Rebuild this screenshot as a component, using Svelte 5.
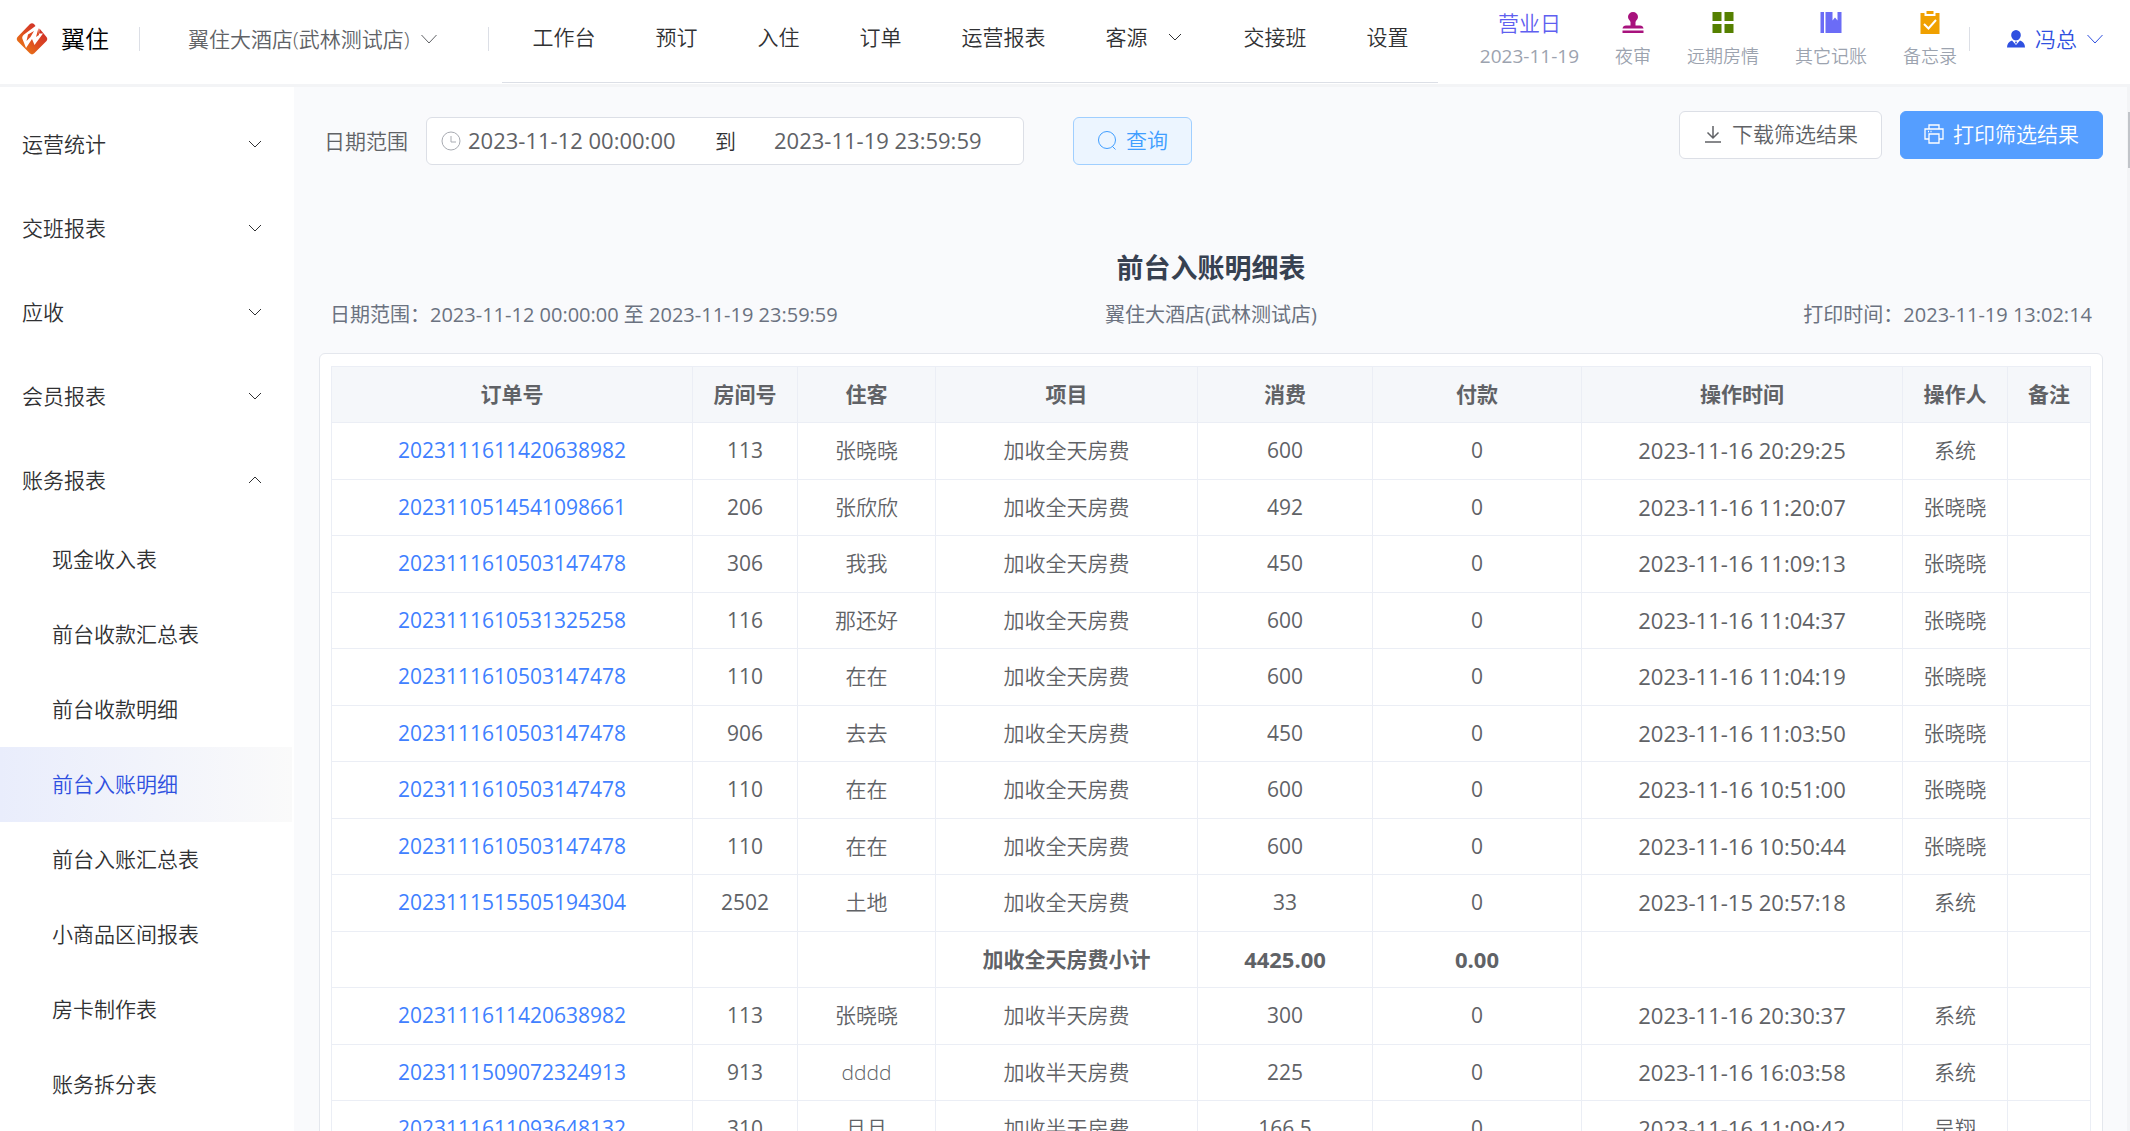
<script>
    let range = ["2023-11-12 00:00:00", "2023-11-19 23:59:59"];
    let hotel = "翼住大酒店(武林测试店)";
    let current = "前台入账明细";
    let opened = "账务报表";

    const menu = ["工作台", "预订", "入住", "订单", "运营报表", "客源", "交接班", "设置"];
    const groups = ["运营统计", "交班报表", "应收", "会员报表", "账务报表"];
    const reports = [
        "现金收入表",
        "前台收款汇总表",
        "前台收款明细",
        "前台入账明细",
        "前台入账汇总表",
        "小商品区间报表",
        "房卡制作表",
        "账务拆分表",
    ];

    const columns = [
        { title: "订单号", width: 361 },
        { title: "房间号", width: 105 },
        { title: "住客", width: 138 },
        { title: "项目", width: 262 },
        { title: "消费", width: 175 },
        { title: "付款", width: 209 },
        { title: "操作时间", width: 321 },
        { title: "操作人", width: 105 },
        { title: "备注", width: 83 },
    ];

    //order, room, guest, item, charge, paid, time, operator
    const rows = [
        ["2023111611420638982", "113", "张晓晓", "加收全天房费", "600", "0", "2023-11-16 20:29:25", "系统"],
        ["2023110514541098661", "206", "张欣欣", "加收全天房费", "492", "0", "2023-11-16 11:20:07", "张晓晓"],
        ["2023111610503147478", "306", "我我", "加收全天房费", "450", "0", "2023-11-16 11:09:13", "张晓晓"],
        ["2023111610531325258", "116", "那还好", "加收全天房费", "600", "0", "2023-11-16 11:04:37", "张晓晓"],
        ["2023111610503147478", "110", "在在", "加收全天房费", "600", "0", "2023-11-16 11:04:19", "张晓晓"],
        ["2023111610503147478", "906", "去去", "加收全天房费", "450", "0", "2023-11-16 11:03:50", "张晓晓"],
        ["2023111610503147478", "110", "在在", "加收全天房费", "600", "0", "2023-11-16 10:51:00", "张晓晓"],
        ["2023111610503147478", "110", "在在", "加收全天房费", "600", "0", "2023-11-16 10:50:44", "张晓晓"],
        ["2023111515505194304", "2502", "土地", "加收全天房费", "33", "0", "2023-11-15 20:57:18", "系统"],
        ["", "", "", "加收全天房费小计", "4425.00", "0.00", "", ""],
        ["2023111611420638982", "113", "张晓晓", "加收半天房费", "300", "0", "2023-11-16 20:30:37", "系统"],
        ["2023111509072324913", "913", "dddd", "加收半天房费", "225", "0", "2023-11-16 16:03:58", "系统"],
        ["2023111611093648132", "310", "旦旦", "加收半天房费", "166.5", "0", "2023-11-16 11:09:42", "吴翔"],
    ];

    function toggle(group) {
        opened = opened === group ? "" : group;
    }
</script>

<div class="page">
    <header>
        <a class="brand" href="#home">
            <svg width="32" height="32" viewBox="0 0 32 32" aria-hidden="true">
                <defs>
                    <linearGradient id="flame" x1="1" y1="0" x2="0" y2="1">
                        <stop offset="0" stop-color="#c8232c" />
                        <stop offset="0.5" stop-color="#dd4a22" />
                        <stop offset="1" stop-color="#ee8a10" />
                    </linearGradient>
                </defs>
                <path
                    fill="url(#flame)"
                    d="M14 1q2-1.500 4 0l1.500 2L8 11.500q-2.500 2-1.500 4.500L10 25l6-9 2.500 6L27 10.500h-4l.5-5L30.500 14q1.500 2 0 4L18 30.600q-2 1.600-4 0L1.500 18q-1.500-2 0-4z"
                />
                <path fill="#dd4a22" d="M12 11.500 18 8l-3.500 6-4 4zM22.500 5l.5 7-3 2z" />
            </svg>
            <span>翼住</span>
        </a>
        <button class="hotel">
            {hotel}
            <svg width="18" height="18" viewBox="0 0 18 18"><path d="M1.500 5 9 13l7.500-8" /></svg>
        </button>
        <nav>
            {#each menu as item}
                <a href="#{item}">
                    {item}
                    {#if item === "客源"}
                        <svg width="16" height="16" viewBox="0 0 16 16"><path d="M2 5l6 6 6-6" /></svg>
                    {/if}
                </a>
            {/each}
        </nav>
        <div class="tools">
            <button class="day">
                <strong>营业日</strong>
                <span class="date">2023-11-19</span>
            </button>
            <button>
                <svg width="24" height="24" viewBox="0 0 24 24">
                    <path
                        fill="#a8127d"
                        d="M12 1a5 5 0 0 1 5 5c0 2-2 3.500-2.500 5v3.500H19q3 0 3.500 3h-21q.5-3 3.500-3h4.500V11C9 9.500 7 8 7 6a5 5 0 0 1 5-5zM1.500 19.500h21V22h-21z"
                    />
                </svg>
                <span>夜审</span>
            </button>
            <button>
                <svg width="24" height="24" viewBox="0 0 24 24">
                    <path fill="#558000" d="M1.500 1h9v9h-9zM13.500 1h9v9h-9zM1.500 13h9v9h-9zM13.500 13h9v9h-9z" />
                </svg>
                <span>远期房情</span>
            </button>
            <button>
                <svg width="24" height="24" viewBox="0 0 24 24">
                    <path fill="#6b6cf6" d="M1.500 1H5v21H1.500zM6.500 1h7v8.500l2.500-3 2.500 3V1h4v21h-16z" />
                </svg>
                <span>其它记账</span>
            </button>
            <button>
                <svg width="24" height="24" viewBox="0 0 24 24">
                    <path fill="#f0a000" d="M8.500 0h7v3h-7zM2.500 2h4v3h11V2h4v21h-19z" />
                    <path class="tick" d="M6 13l4.500 4.500L18 9" />
                </svg>
                <span>备忘录</span>
            </button>
        </div>
        <button class="user">
            <svg width="20" height="20" viewBox="0 0 20 20">
                <path
                    fill="#2f50e0"
                    stroke="none"
                    d="M10 1a5 5 0 0 1 4.800 5c0 2.500-2 5.500-4.800 5.500S5.200 8.500 5.200 6A5 5 0 0 1 10 1zM6 11.500l4 4.500 4-4.500c3 1 5 3.500 5 7H1c0-3.500 2-6 5-7zM10 12l1 1.500-1 1.500-1-1.500z"
                />
            </svg>
            冯总
            <svg width="18" height="18" viewBox="0 0 18 18"><path d="M1.500 5 9 13l7.500-8" /></svg>
        </button>
    </header>

    <div class="body">
        <aside>
            {#each groups as group}
                <button class="group" on:click={() => toggle(group)}>
                    {group}
                    <svg width="16" height="16" viewBox="0 0 16 16">
                        <path d={opened === group ? "M2 11l6-6 6 6" : "M2 5l6 6 6-6"} />
                    </svg>
                </button>
                {#if opened === group}
                    {#each reports as report}
                        <a
                            href="#{report}"
                            class={current === report ? "report active" : "report"}
                            on:click={() => (current = report)}
                        >
                            {report}
                        </a>
                    {/each}
                {/if}
            {/each}
        </aside>

        <main>
            <form class="filter" on:submit|preventDefault>
                <label for="start">日期范围</label>
                <div class="range">
                    <svg width="20" height="20" viewBox="0 0 20 20">
                        <circle cx="10" cy="10" r="9" />
                        <path d="M10 5v6h5" />
                    </svg>
                    <input id="start" bind:value={range[0]} />
                    <label for="end">到</label>
                    <input id="end" bind:value={range[1]} />
                </div>
                <button class="btn query">
                    <svg width="20" height="20" viewBox="0 0 20 20">
                        <circle cx="10" cy="10" r="8.500" />
                        <path d="M15.500 16.500l3 3" />
                    </svg>
                    查询
                </button>
                <div class="actions">
                    <button class="btn" type="button">
                        <svg width="20" height="20" viewBox="0 0 20 20" stroke-width="1.500">
                            <path d="M10 2v12M4.500 8.500 10 14l5.500-5.500M2 18h16" />
                        </svg>
                        下载筛选结果
                    </button>
                    <button class="btn print" type="button">
                        <svg width="20" height="20" viewBox="0 0 20 20" stroke-width="1.300">
                            <path d="M5 5V1h10v4M5 15H1V5h18v10h-4M5 10h10v9H5zM4 7.500h1M6.500 7.500h1" />
                        </svg>
                        打印筛选结果
                    </button>
                </div>
            </form>

            <h1>前台入账明细表</h1>
            <div class="info">
                <span>日期范围：{range[0]} 至 {range[1]}</span>
                <span>{hotel}</span>
                <span>打印时间：2023-11-19 13:02:14</span>
            </div>

            <div class="card">
                <table>
                    <colgroup>
                        {#each columns as column}
                            <col style="width: {column.width}px" />
                        {/each}
                    </colgroup>
                    <thead>
                        <tr>
                            {#each columns as column}
                                <th>{column.title}</th>
                            {/each}
                        </tr>
                    </thead>
                    <tbody>
                        {#each rows as row}
                            <tr class:subtotal={!row[0]}>
                                <td>
                                    {#if row[0]}<a href="#{row[0]}">{row[0]}</a>{/if}
                                </td>
                                <td>{row[1]}</td>
                                <td class="name">{row[2]}</td>
                                <td class="name">{row[3]}</td>
                                <td class="amount">{row[4]}</td>
                                <td class="amount">{row[5]}</td>
                                <td class="time">{row[6]}</td>
                                <td class="name">{row[7]}</td>
                                <td></td>
                            </tr>
                        {/each}
                    </tbody>
                </table>
            </div>
        </main>
        <div class="scrollbar"><div class="thumb"></div></div>
    </div>
</div>

<style>
    :global(body) {
        overflow: hidden;
    }

    .page {
        display: flex;
        flex-direction: column;
        height: 100vh;
        font-family: "Open Sans", "Noto Sans CJK SC", sans-serif;
        font-size: 21px;
        line-height: 30px;
        color: #606266;
        background-color: #f9fafc;
    }

    .page * {
        box-sizing: border-box;
    }

    button,
    input {
        font: inherit;
        color: inherit;
        background: none;
        border: none;
        padding: 0;
    }

    button {
        display: flex;
        align-items: center;
        white-space: nowrap;
        cursor: pointer;
    }

    a {
        color: inherit;
        text-decoration: none;
    }

    svg {
        flex: none;
        fill: none;
        stroke: currentColor;
    }

    header {
        display: flex;
        flex: none;
        height: 87px;
        padding: 0 26px 0 16px;
        background-color: white;
        border-bottom: 3px solid #f3f4f6;
        font-weight: 350;
    }

    .brand {
        display: flex;
        align-items: center;
        gap: 13px;
        padding-bottom: 6px;
        font-size: 24px;
        color: #000;
    }

    .brand svg {
        stroke: none;
    }

    .hotel {
        gap: 11px;
        height: 24px;
        margin: 27px 13px 0 30px;
        padding: 0 50px 0 48px;
        border-left: 1px solid #dcdfe6;
        border-right: 1px solid #dcdfe6;
    }

    nav {
        display: flex;
        height: 83px;
        border-bottom: 1px solid #dcdfe6;
        color: #303133;
    }

    nav a {
        display: flex;
        align-items: center;
        gap: 20px;
        padding: 0 30px 8px;
        white-space: nowrap;
    }

    .tools {
        display: flex;
        gap: 36px;
        margin-left: auto;
        padding: 8px 12px 0 0;
    }

    .tools button {
        flex-direction: column;
        align-self: flex-start;
        gap: 3px;
        height: 64px;
        font-size: 18px;
        color: #9ca3af;
    }

    .tools svg {
        height: 30px;
        stroke: none;
    }

    .tools .tick {
        stroke: white;
        stroke-width: 2;
    }

    .tools strong {
        font-size: 21px;
        font-weight: 350;
        color: #5f5ff0;
    }

    .tools .date {
        font-size: 19px;
        font-weight: 400;
    }

    .user {
        gap: 9px;
        height: 24px;
        margin-top: 27px;
        padding-left: 36px;
        border-left: 1px solid #dcdfe6;
        color: #2f50e0;
    }

    .body {
        display: flex;
        flex: 1;
        min-height: 0;
    }

    aside {
        flex: none;
        width: 294px;
        padding: 15px 2px 0 0;
        overflow: hidden;
        background-color: white;
        color: #303133;
        font-weight: 350;
    }

    .group {
        justify-content: space-between;
        width: 100%;
        height: 84px;
        padding: 0 29px 0 22px;
    }

    .report {
        display: flex;
        align-items: center;
        height: 75px;
        padding: 0 0 2px 52px;
    }

    .active {
        color: #2f50e0;
        background: linear-gradient(to right, #e9edfc, #fafafa);
    }

    main {
        flex: 1;
        min-width: 0;
        padding: 24px 24px 0 25px;
        overflow: hidden;
    }

    .filter {
        display: flex;
        align-items: center;
        padding-left: 5px;
    }

    label {
        padding-top: 6px;
        font-weight: 350;
    }

    .range {
        display: flex;
        align-items: center;
        width: 598px;
        height: 48px;
        margin: 6px 49px 0 18px;
        padding: 0 14px;
        border: 1px solid #dcdfe6;
        border-radius: 6px;
        background-color: white;
    }

    .range svg {
        color: #a8abb2;
    }

    .range input {
        flex: none;
        width: 247px;
        margin-left: 7px;
        padding-bottom: 2px;
        font-size: 22px;
    }

    .range input:last-child {
        flex: 1;
        min-width: 0;
    }

    .range label {
        flex: none;
        width: 52px;
        padding: 0;
        color: #303133;
    }

    .btn {
        gap: 9px;
        height: 48px;
        padding: 0 23px 2px;
        border: 1px solid #dcdfe6;
        border-radius: 6px;
        background-color: white;
        font-weight: 350;
    }

    .query {
        margin-top: 6px;
        color: #409eff;
        background-color: #ecf5ff;
        border-color: #a0cfff;
    }

    .actions {
        display: flex;
        align-self: flex-start;
        gap: 18px;
        margin-left: auto;
    }

    .print {
        color: white;
        background-color: #559eff;
        border-color: #559eff;
    }

    h1 {
        margin: 85px 0 0;
        font-size: 27px;
        line-height: 36px;
        text-align: center;
        color: #374151;
    }

    .info {
        display: grid;
        grid-template-columns: 1fr auto 1fr;
        padding: 14px 11px 23px;
        font-size: 20px;
        color: #6b7280;
    }

    .info span:last-child {
        text-align: right;
    }

    .card {
        padding: 12px 12px 12px 11px;
        border: 1px solid #e4e7ed;
        border-radius: 6px;
        background-color: white;
    }

    table {
        width: 100%;
        table-layout: fixed;
        border-collapse: collapse;
    }

    th,
    td {
        height: 57px;
        padding: 0 0 2px;
        border: 1px solid #ebeef5;
        text-align: center;
    }

    th,
    tr:nth-child(even) td {
        height: 56px;
    }

    th {
        background-color: #f5f7fa;
    }

    td a {
        color: #4080ff;
    }

    .name {
        font-weight: 350;
    }

    .time,
    .subtotal .amount {
        font-size: 22px;
    }

    .subtotal td {
        font-weight: 700;
    }

    .scrollbar {
        flex: none;
        width: 3px;
        padding-top: 25px;
        background-color: #f3f4f6;
    }

    .thumb {
        height: 56px;
        margin-left: 1px;
        background-color: #c1c4c9;
    }
</style>
